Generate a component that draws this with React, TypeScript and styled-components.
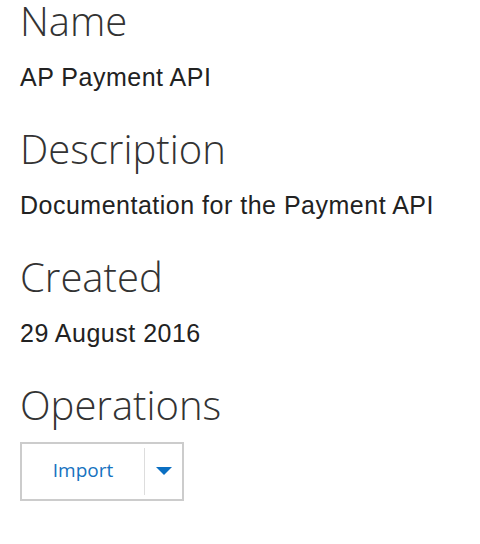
import React from "react";
import styled, { createGlobalStyle } from "styled-components";

const Global = createGlobalStyle`
  html, body { margin: 0; padding: 0; background: #ffffff; }
  body { font-family: "Liberation Sans", Arial, sans-serif; }
`;

const Page = styled.div`
  padding: 0 20px;
  display: flex;
  flex-direction: column;
`;

const Section = styled.section`
  display: flex;
  flex-direction: column;
  margin-bottom: 36px;
`;

const Heading = styled.h2`
  margin: 0;
  font-family: "Open Sans", sans-serif;
  font-weight: 300;
  font-size: 40px;
  line-height: 41px;
  color: #333333;
`;

const Value = styled.div`
  margin-top: 21px;
  font-family: "Liberation Sans", Arial, sans-serif;
  font-size: 25px;
  letter-spacing: 0.5px;
  line-height: 30px;
  color: #222222;
`;

const SplitButton = styled.div`
  margin-top: 17px;
  width: 164px;
  height: 59px;
  box-sizing: border-box;
  border: 2px solid #cccccc;
  display: flex;
  align-items: stretch;
  background: #ffffff;
`;

const MainPart = styled.button`
  flex: 1;
  border: 0;
  background: transparent;
  font-family: "Open Sans", sans-serif;
  font-size: 19px;
  line-height: 1;
  color: #1672bf;
  padding: 0 0 2px 0;
  cursor: pointer;
`;

const Divider = styled.span`
  width: 1px;
  margin: 4px 0;
  background: #dddddd;
`;

const ArrowPart = styled.button`
  width: 37px;
  border: 0;
  background: transparent;
  padding: 0 0 2px 0;
  display: flex;
  align-items: center;
  justify-content: center;
  cursor: pointer;
`;

const Caret = styled.span`
  width: 0;
  height: 0;
  border-left: 8px solid transparent;
  border-right: 8px solid transparent;
  border-top: 8px solid #0a6fc2;
`;

const items = [
  { label: "Name", value: "AP Payment API" },
  { label: "Description", value: "Documentation for the Payment API" },
  { label: "Created", value: "29 August 2016" },
];

export default function App() {
  return (
    <>
      <Global />
      <Page>
        {items.map((it) => (
          <Section key={it.label}>
            <Heading>{it.label}</Heading>
            <Value>{it.value}</Value>
          </Section>
        ))}
        <Heading>Operations</Heading>
        <SplitButton>
          <MainPart>Import</MainPart>
          <Divider />
          <ArrowPart aria-label="More">
            <Caret />
          </ArrowPart>
        </SplitButton>
      </Page>
    </>
  );
}
